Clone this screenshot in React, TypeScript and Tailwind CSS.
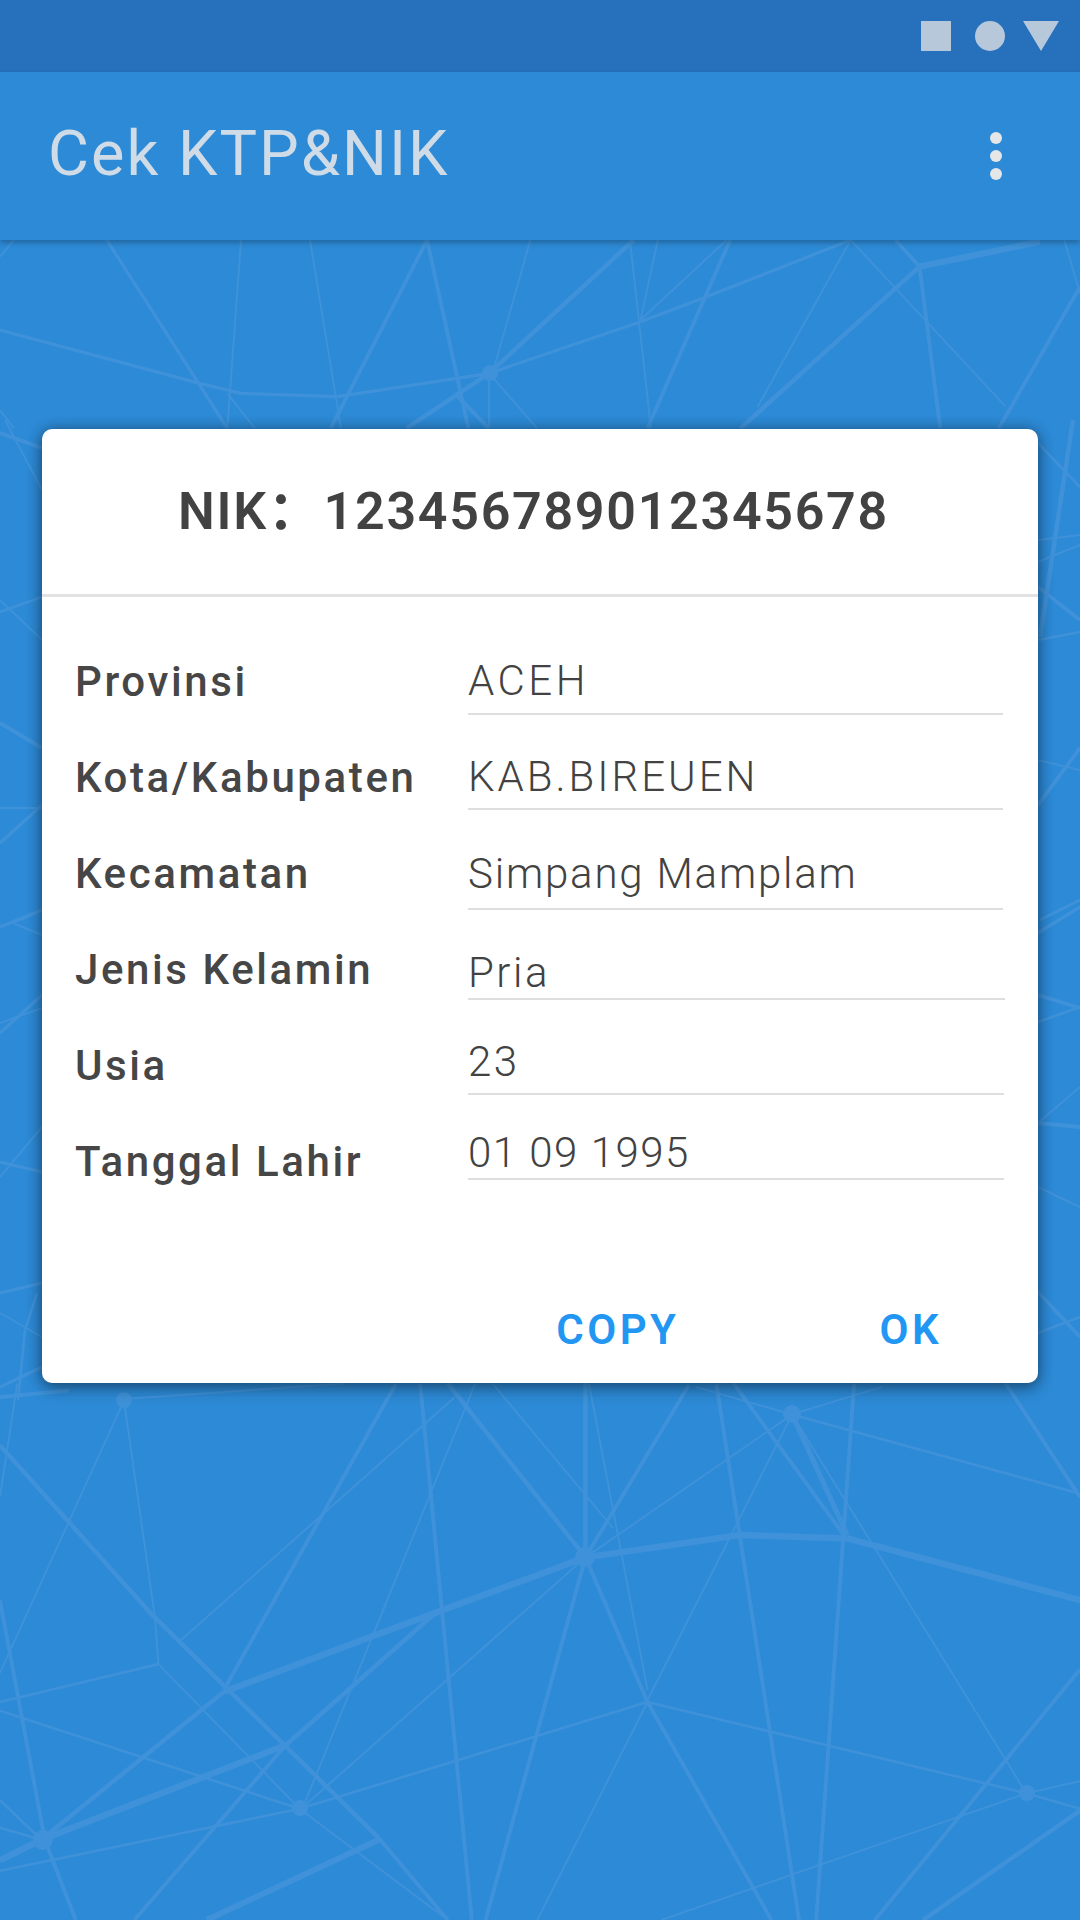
const bottom: number[][] = [
  [1570,640,1230,460,5],[1230,460,1075,450,5],[1075,450,850,515,5],[850,515,640,670,5],[640,670,325,905,5],
  [325,905,60,1335,3.5],[415,1060,60,1335,5],[60,1335,0,1395,5],[630,680,415,1060,3.5],[415,1060,195,1568,3],
  [0,190,220,680,3.5],[220,680,550,1330,3.5],[550,1330,650,1568,3],[550,1335,300,1568,4.5],
  [180,60,225,690,1.5],[225,690,230,825,1.5],[180,60,0,850,1.5],[230,825,0,935,2],[230,825,435,1245,1.5],[435,1245,650,1568,1.5],
  [0,960,435,1245,2],[435,1245,0,1425,2],[435,1245,940,935,2],[940,935,1490,1200,2],[1490,1200,960,1568,1.5],[1150,100,1490,1200,1.5],
  [1490,1200,1568,1245,2],[1490,1200,1568,1165,1.5],[850,515,940,935,3],[940,935,1120,1568,3],[940,935,780,1568,1.5],[850,515,705,1568,3],
  [850,515,440,1240,1.5],[850,5,850,515,3.5],[855,10,940,900,1.5],[1000,15,850,515,3],[650,10,850,515,3.5],[715,10,890,430,1.5],
  [575,10,325,900,3],[610,10,685,1568,3],[690,10,440,1240,1.5],[660,50,260,760,1.5],[1150,100,850,515,1.5],[1150,100,1230,450,4],
  [1065,10,1225,450,3],[1040,10,1160,1568,3],[1240,10,1185,1568,3],[1150,100,940,930,1.5],[1150,100,1568,330,2],[1460,10,1568,340,3],
  [1568,840,1270,1568,3],[1568,1250,1340,1568,3.5],[1150,100,1010,20,1.5],[1280,20,1150,100,1.5],[25,10,0,340,1.5],
  [0,640,65,1335,3],[65,1335,110,1568,3],[60,1335,0,1220,2],[0,1300,60,1335,2],[180,55,500,10,1.5],[0,50,100,30,3],
].map(([a,b,c,d,w]) => [a*0.6888,1380+b*0.3444,c*0.6888,1380+d*0.3444,w]);

const top: number[][] = [
  [155,720,330,1285,2.5],[350,720,330,1285,1.5],[450,720,495,1285,1.5],[620,720,480,1285,3],[620,720,680,1285,3],[770,720,715,1120,1.5],
  [0,990,290,1150,2.5],[290,1150,350,1180,2.5],[350,1180,490,1190,2.5],[490,1190,710,1120,2.5],[710,1120,930,965,2.5],[930,965,1020,895,2.5],[1020,895,1235,720,2.5],
  [920,720,710,1120,3.5],[710,1120,590,1285,3.5],[915,730,945,1285,1.5],[955,720,930,960,1.5],[1060,720,940,1285,3],[1055,720,930,960,1.5],
  [1235,720,1460,1220,1.5],[1235,720,1100,1220,1.5],[1300,720,1335,800,3],[1335,800,1075,1285,3.5],[1335,800,1510,725,5],[1335,800,1365,1285,3],
  [1545,720,1568,880,1.5],[1568,860,1450,1285,3],[710,1120,710,1285,1.5],[710,1120,780,1285,1.5],[660,1180,710,1285,3],[330,1180,370,1285,1.5],
  [0,1230,20,1285,1.5],[20,720,0,770,1.5],
].map(([a,b,c,d,w]) => [a*0.6888,b/3,c*0.6888,d/3,w]);

const sides: number[][] = [
  [0,433,42,448,3],[5,420,42,490,1.5],[0,612,42,597,2],[0,600,42,640,1.5],[0,723,42,748,3],[0,843,42,805,2.5],[0,808,42,808,1.5],[20,920,42,910,2],
  [0,927,42,910,2.5],[13,923,42,935,1.5],[0,1033,42,995,2.5],[0,1023,42,1008,1.5],[0,1177,42,1127,1.5],[0,1162,42,1172,2.5],[0,1293,42,1283,2.5],
  [0,1313,42,1337,1.5],[18,1400,25,1330,2],[25,1330,37,1293,2],[0,1387,42,1367,2.5],
  [1038,443,1080,487,2],[1073,420,1040,637,3.5],[1038,540,1080,535,1.5],[1038,562,1080,545,1.5],[1038,587,1080,620,3],[1038,640,1080,632,2],
  [1038,760,1080,770,1.5],[1038,805,1080,748,3],[1040,920,1080,900,2],[1038,933,1080,907,2.5],[1038,995,1080,1008,3],[1038,1022,1080,1007,2],
  [1038,1123,1080,1087,1.5],[1038,1123,1080,1127,3],[1038,1187,1080,1207,1.5],[1038,1292,1080,1337,3],[1038,1333,1080,1317,2],
];

const nodes: number[][] = [
  [490,373,8],[124,1400,8],[585,1557,10],[792,1414,9],[300,1808,8],[1027,1793,8],[43,1840,10],
];

const rows = [
  { label: "Provinsi", value: "ACEH", height: "h-[82px]", lineX: "w-[535px]", pad: "pb-[9px]", track: "tracking-[3.5px]" },
  { label: "Kota/Kabupaten", value: "KAB.BIREUEN", height: "h-[95px]", lineX: "w-[535px]", pad: "pb-[8px]", track: "tracking-[3px]" },
  { label: "Kecamatan", value: "Simpang Mamplam", height: "h-[100px]", lineX: "w-[535px]", pad: "pb-[11px]", track: "tracking-[1.8px]" },
  { label: "Jenis Kelamin", value: "Pria", height: "h-[90px]", lineX: "w-[537px]", pad: "pb-[2px]", track: "tracking-[2.5px]" },
  { label: "Usia", value: "23", height: "h-[95px]", lineX: "w-[536px]", pad: "pb-[8px]", track: "tracking-[2.5px]" },
  { label: "Tanggal Lahir", value: "01 09 1995", height: "h-[85px]", lineX: "w-[536px]", pad: "pb-[2px]", track: "tracking-[1.5px]" },
];

export default function App() {
  return (
    <div className="relative w-[1080px] h-[1920px] overflow-hidden bg-[#2d8ad6] font-['Roboto','Noto_Sans_CJK_SC',sans-serif]">
      <svg className="absolute inset-0" width="1080" height="1920" viewBox="0 0 1080 1920" fill="none">
        {[...top, ...bottom, ...sides].map(([x1, y1, x2, y2, w], i) => (
          <line key={i} x1={x1} y1={y1} x2={x2} y2={y2} stroke="#3f92d9" strokeWidth={w * 1.3} />
        ))}
        {nodes.map(([cx, cy, r], i) => (
          <circle key={i} cx={cx} cy={cy} r={r} fill="#3f92d9" />
        ))}
      </svg>

      <div className="relative flex flex-col h-full">
        <div className="h-[72px] bg-[#2670bc] flex items-start justify-end pt-[21px] pr-[21px]">
          <svg width="138" height="30" viewBox="0 0 138 30" fill="#b7c8da">
            <rect x="0" y="0" width="30" height="30" />
            <circle cx="69" cy="15" r="15" />
            <path d="M102 0H138L120 30Z" />
          </svg>
        </div>
        <div className="h-[168px] bg-[#2d8ad6] shadow-[0_3px_5px_rgba(0,0,0,0.25)] flex items-center justify-between pl-[48px] pr-[78px]">
          <span className="text-[63px] leading-none text-[#cfdbe6] tracking-[2px] pb-[6px]">Cek KTP&amp;NIK</span>
          <div className="flex flex-col gap-[6px]">
            <span className="w-[12px] h-[12px] rounded-full bg-[#e4e6e8]" />
            <span className="w-[12px] h-[12px] rounded-full bg-[#e4e6e8]" />
            <span className="w-[12px] h-[12px] rounded-full bg-[#e4e6e8]" />
          </div>
        </div>

        <div className="ml-[42px] mt-[189px] w-[996px] h-[954px] bg-white rounded-[10px] shadow-[0_0_14px_rgba(0,0,0,0.3),0_6px_16px_rgba(0,0,0,0.3)] flex flex-col">
          <div className="h-[165px] flex items-center justify-center pr-[13px] text-[52px] font-semibold tracking-[1.7px] text-[#424242] whitespace-nowrap">
            <span>NIK：</span>
            <span className="ml-[2px]">123456789012345678</span>
          </div>
          <div className="h-[3px] bg-[#e2e2e2]" />
          <div className="flex pl-[33px] pt-[36px]">
            <div className="w-[393px] flex flex-col">
              {rows.map((r) => (
                <div key={r.label} className="h-[96px] flex items-center text-[42px] font-medium tracking-[2.6px] text-[#464646] whitespace-nowrap">
                  {r.label}
                </div>
              ))}
            </div>
            <div className="flex flex-col">
              {rows.map((r) => (
                <div key={r.label} className={`${r.height} ${r.lineX} flex items-end`}>
                  <div className={`w-full border-b-2 border-[#dedede] text-[42px] leading-[46px] font-light text-[#424242] whitespace-nowrap ${r.track} ${r.pad}`}>
                    {r.value}
                  </div>
                </div>
              ))}
            </div>
          </div>
          <div className="mt-auto h-[108px] flex items-center justify-end text-[42px] font-semibold tracking-[3.5px] text-[#2196f3]">
            <span className="mr-[200px]">COPY</span>
            <span className="mr-[96px]">OK</span>
          </div>
        </div>
      </div>
    </div>
  );
}
